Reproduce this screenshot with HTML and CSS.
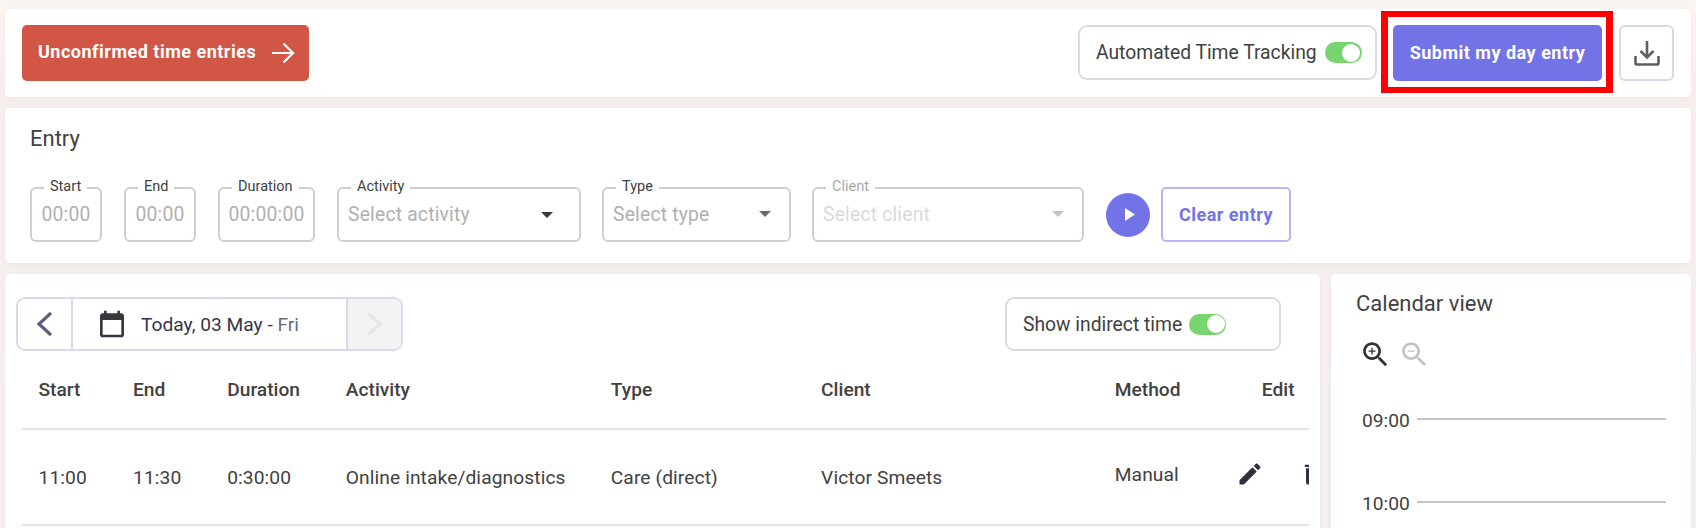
FILE: index.html
```html
<!DOCTYPE html>
<html lang="en">
<head>
<meta charset="utf-8">
<title>Time entries</title>
<link rel="stylesheet" href="styles.css">
</head>
<body>
<section class="card topbar">
  <button class="btn btn-red">Unconfirmed time entries
    <svg class="arrow" width="24" height="22" viewBox="0 0 24 22" fill="none" stroke="#fff" stroke-width="2.2"><path d="M1 11h21M12.500 1.500 22 11l-9.500 9.500"/></svg>
  </button>
  <div class="top-actions">
    <div class="switch-box auto"><span>Automated Time Tracking</span><span class="toggle"></span></div>
    <button class="btn btn-purple submit">Submit my day entry</button>
    <button class="btn-download" aria-label="Download">
      <svg width="26" height="26" viewBox="0 0 26 26" fill="none" stroke="#5f5f5f" stroke-width="2.600"><path d="M13 1v16M6.500 11 13 17.500 19.500 11M1.500 16v7.500a1 1 0 0 0 1 1h21a1 1 0 0 0 1-1V16"/></svg>
    </button>
  </div>
</section>

<section class="card entry">
  <h2 class="title">Entry</h2>
  <div class="fields">
    <div class="field f-start"><label class="lbl">Start</label><span class="ph">00:00</span></div>
    <div class="field f-end"><label class="lbl">End</label><span class="ph">00:00</span></div>
    <div class="field f-dur"><label class="lbl">Duration</label><span class="ph">00:00:00</span></div>
    <div class="field sel f-act"><label class="lbl">Activity</label><span class="ph">Select activity</span><i class="caret"></i></div>
    <div class="field sel f-type"><label class="lbl">Type</label><span class="ph">Select type</span><i class="caret mid"></i></div>
    <div class="field sel f-client off"><label class="lbl">Client</label><span class="ph">Select client</span><i class="caret pale"></i></div>
    <div class="entry-actions">
      <button class="play" aria-label="Start"><svg width="10" height="13" viewBox="0 0 10 13"><path d="M0 0l10 6.500L0 13z" fill="#fff"/></svg></button>
      <button class="btn-clear">Clear entry</button>
    </div>
  </div>
</section>

<div class="columns">
  <section class="card list">
    <div class="list-tools">
      <div class="pager">
        <button class="pg-prev" aria-label="Previous"><svg width="17" height="26" viewBox="0 0 17 26" fill="none" stroke="#5d6079" stroke-width="3.200"><path d="M15 2 3 13l12 11"/></svg></button>
        <div class="pg-date">
          <svg width="32" height="32" viewBox="0 0 24 24" fill="#36373d"><path d="M19 4h-1V2h-2v2H8V2H6v2H5c-1.110 0-1.990.9-1.990 2L3 20c0 1.100.89 2 2 2h14c1.100 0 2-.9 2-2V6c0-1.100-.9-2-2-2zm0 16H5V9h14v11z"/></svg>
          <span class="date-text">Today, 03 May - <span class="day">Fri</span></span>
        </div>
        <button class="pg-next" aria-label="Next"><svg width="17" height="26" viewBox="0 0 17 26" fill="none" stroke="#e6e6e8" stroke-width="3.200"><path d="M2 2l12 11L2 24"/></svg></button>
      </div>
      <div class="switch-box indirect"><span>Show indirect time</span><span class="toggle"></span></div>
    </div>
    <div class="table-wrap">
      <table class="entries">
        <colgroup><col class="c1"><col class="c2"><col class="c3"><col class="c4"><col class="c5"><col class="c6"><col class="c7"><col></colgroup>
        <thead>
          <tr><th>Start</th><th>End</th><th>Duration</th><th>Activity</th><th>Type</th><th>Client</th><th>Method</th><th class="th-edit">Edit</th></tr>
        </thead>
        <tbody>
          <tr>
            <td>11:00</td><td>11:30</td><td>0:30:00</td><td>Online intake/diagnostics</td><td>Care (direct)</td><td>Victor Smeets</td><td class="td-method">Manual</td>
            <td class="td-edit"><div class="row-icons">
              <svg width="28" height="28" viewBox="0 0 24 24" fill="#2f3140"><path d="M3 17.250V21h3.750L17.810 9.940l-3.750-3.750L3 17.250zM20.710 7.040c.39-.39.39-1.020 0-1.410l-2.340-2.340c-.39-.39-1.020-.39-1.410 0l-1.830 1.830 3.750 3.750 1.830-1.830z"/></svg>
              <svg width="28" height="28" viewBox="0 0 24 24" fill="#2f3140"><path d="M6 19c0 1.100.9 2 2 2h8c1.100 0 2-.9 2-2V7H6v12zM19 4h-3.500l-1-1h-5l-1 1H5v2h14V4z"/></svg>
            </div></td>
          </tr>
        </tbody>
      </table>
    </div>
  </section>

  <aside class="card calendar">
    <h2 class="title">Calendar view</h2>
    <div class="zooms">
      <svg width="33" height="33" viewBox="0 0 24 24" fill="#33343a"><path d="M15.500 14h-.79l-.28-.27C15.410 12.590 16 11.110 16 9.500 16 5.910 13.090 3 9.500 3S3 5.910 3 9.500 5.910 16 9.500 16c1.610 0 3.090-.59 4.230-1.570l.27.28v.79l5 4.990L20.490 19l-4.990-5zm-6 0C7.010 14 5 11.990 5 9.500S7.010 5 9.500 5 14 7.010 14 9.500 11.990 14 9.500 14z"/><path d="M12 10h-2v2H9v-2H7V9h2V7h1v2h2v1z"/></svg>
      <svg width="33" height="33" viewBox="0 0 24 24" fill="#c4c4c4"><path d="M15.500 14h-.79l-.28-.27C15.410 12.590 16 11.110 16 9.500 16 5.910 13.090 3 9.500 3S3 5.910 3 9.500 5.910 16 9.500 16c1.610 0 3.090-.59 4.230-1.570l.27.28v.79l5 4.990L20.490 19l-4.990-5zm-6 0C7.010 14 5 11.990 5 9.500S7.010 5 9.500 5 14 7.010 14 9.500 11.990 14 9.500 14z"/><path d="M7 9h5v1H7z"/></svg>
    </div>
    <div class="hour"><span>09:00</span><i></i></div>
    <div class="hour"><span>10:00</span><i></i></div>
  </aside>
</div>
</body>
</html>
```
FILE: styles.css
```css
* { box-sizing: border-box; }
html, body { height: 528px; overflow: hidden; }
body {
  margin: 0;
  padding: 9px 5px 0;
  background: linear-gradient(#fbf5f2, #f6efed 100px, #f5eff0);
  font-family: Roboto, "Liberation Sans", sans-serif;
  color: #414141;
}
button { font-family: inherit; cursor: pointer; }
.card {
  background: #fff;
  border-radius: 5px;
  box-shadow: 0 2px 6px rgba(150, 110, 100, .06);
}
.title { margin: 0; font-size: 22px; font-weight: 400; line-height: 26px; color: #414141; }

.topbar {
  height: 88px;
  padding: 16px 17px 16px 16.500px;
  display: flex;
  justify-content: space-between;
  align-items: flex-start;
}
.btn {
  height: 56px;
  border: 0;
  border-radius: 5px;
  padding-bottom: 3px;
  color: #fff;
  font-size: 18px;
  font-weight: 700;
  letter-spacing: .5px;
}
.btn-red {
  flex: none;
  width: 287.500px;
  background: #d15646;
  display: flex;
  align-items: center;
  padding: 0 0 3px 16.500px;
  gap: 15px;
}
.arrow { flex: none; margin-top: 3px; }
.top-actions { display: flex; align-items: flex-start; }
.switch-box {
  display: flex;
  align-items: center;
  gap: 8px;
  height: 55px;
  border: 2px solid #dcdcdc;
  border-radius: 9px;
  font-size: 19.300px;
  color: #3f3f3f;
}
.auto { width: 299px; padding-left: 16px; margin-right: 16px; }
.toggle {
  position: relative;
  display: block;
  flex: none;
  width: 37px;
  height: 21px;
  border-radius: 11px;
  background: #78d46f;
}
.toggle::after {
  content: "";
  position: absolute;
  top: 1.500px;
  right: 1.500px;
  width: 18px;
  height: 18px;
  border-radius: 50%;
  background: #fff;
}
.btn-purple { background: #7373e8; }
.submit { position: relative; width: 209px; margin-right: 17px; }
.submit::after {
  content: "";
  position: absolute;
  inset: -14px -11px -12px -12px;
  border: solid #fe0000;
  border-width: 6px 7px;
}
.btn-download {
  width: 55px;
  height: 56px;
  background: #fff;
  border: 2px solid #dadaec;
  border-radius: 6px;
  padding: 0;
  display: flex;
  align-items: center;
  justify-content: center;
}

.entry {
  height: 155px;
  margin-top: 11px;
  padding: 18px 25px 0;
}
.fields { display: flex; align-items: flex-start; margin-top: 35px; }
.field {
  position: relative;
  flex: none;
  height: 55px;
  border: 2px solid #cfcfcf;
  border-radius: 6px;
  display: flex;
  align-items: center;
  margin-right: 22px;
  padding-left: 9px;
  font-size: 19.300px;
}
.f-start, .f-end { width: 72px; justify-content: center; padding: 0; }
.f-dur { width: 97px; justify-content: center; padding: 0; }
.f-act { width: 244px; margin-right: 21px; }
.f-type { width: 189px; margin-right: 21px; }
.f-client { width: 272px; margin-right: 22px; }
.lbl {
  position: absolute;
  top: -10px;
  left: 12px;
  padding: 0 6px;
  background: #fff;
  font-size: 14.500px;
  line-height: 16px;
  color: #3f3f3f;
}
.ph { color: #b0b0b0; letter-spacing: .2px; }
.off .lbl { color: #a8a8a8; }
.off .ph { color: #dadada; }
.caret {
  position: absolute;
  top: 23px;
  right: 26px;
  border: solid transparent;
  border-width: 6px 6px 0;
  border-top-color: #3a3a3a;
}
.caret.mid { border-top-color: #6b6b6b; right: 18px; top: 22px; }
.caret.pale { border-top-color: #c2c2c2; right: 18px; top: 22px; }
.entry-actions { display: flex; align-items: center; gap: 11px; }
.play {
  width: 44px;
  height: 44px;
  border: 0;
  border-radius: 50%;
  background: #7373e8;
  padding: 0 0 0 3px;
  display: flex;
  align-items: center;
  justify-content: center;
}
.btn-clear {
  width: 130px;
  height: 55px;
  background: #fff;
  border: 2px solid #b7b7f3;
  border-radius: 5px;
  color: #7373e8;
  font-size: 18px;
  font-weight: 700;
  letter-spacing: .5px;
}

.columns { display: flex; gap: 11px; margin-top: 11px; align-items: stretch; height: 254px; }
.list { width: 1315px; padding: 23px 11px 0; overflow: hidden; border-radius: 5px 5px 0 0; }
.list-tools { display: flex; justify-content: space-between; padding-right: 28px; }
.pager {
  display: flex;
  width: 387px;
  height: 54px;
  border: 2px solid #dadaea;
  border-radius: 9px;
  overflow: hidden;
}
.pg-prev, .pg-next {
  flex: none;
  width: 53px;
  border: 0;
  padding: 0;
  background: #fff;
  display: flex;
  align-items: center;
  justify-content: center;
}
.pg-next { width: 55px; background: #f3f3f4; border-left: 2px solid #dadaea; }
.pg-date {
  flex: 1;
  display: flex;
  align-items: center;
  gap: 13px;
  padding-left: 23px;
  border-left: 2px solid #dadaea;
}
.date-text { font-size: 19.200px; color: #33364a; }
.day { color: #676a85; }
.indirect { width: 276px; height: 54px; padding-left: 16px; gap: 7px; }

.table-wrap { overflow: hidden; margin-left: 5.500px; width: 1287.500px; }
.entries { table-layout: fixed; width: 1287.500px; border-collapse: collapse; font-size: 19.200px; }
.c1 { width: 94.500px; }
.c2 { width: 94.200px; }
.c3 { width: 118.600px; }
.c4 { width: 265px; }
.c5 { width: 210.300px; }
.c6 { width: 293.700px; }
.c7 { width: 127px; }
th, td { text-align: left; padding: 0 0 0 17px; white-space: nowrap; color: #414141; }
th { height: 78px; font-weight: 500; border-bottom: 2px solid #e4e4e6; }
td { height: 96px; font-weight: 400; border-bottom: 2px solid #e4e4e6; letter-spacing: .1px; }
.th-edit { padding-left: 37px; }
.td-method { padding-bottom: 6px; }
.td-edit { padding: 0 0 6px 0; overflow: hidden; }
.row-icons { display: flex; gap: 35px; margin-left: 11px; }
.row-icons svg { flex: none; }

.calendar { width: 360px; padding: 17px 25px 0; border-radius: 5px 5px 0 0; overflow: hidden; }
.zooms { display: flex; gap: 9px; margin: 21px 0 0 6px; height: 41px; }
.zooms svg { margin-left: -3px; flex: none; }
.hour { display: flex; align-items: center; height: 83px; margin-left: 6px; font-size: 19.200px; }
.hour span { width: 55px; color: #414141; }
.hour i { flex: 1; height: 2px; background: #c6c6c6; margin-top: -3px; }
```
